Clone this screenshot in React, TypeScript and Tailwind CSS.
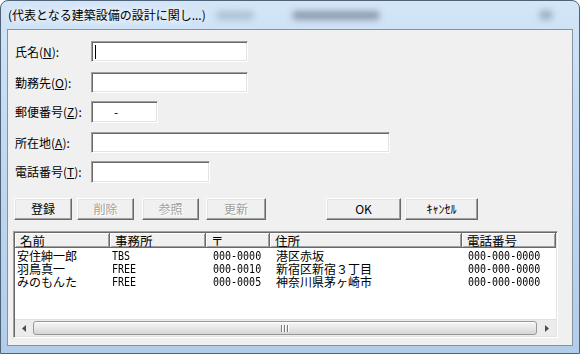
import React from "react";

const sunken =
  "bg-white border border-t-[#a0a0a0] border-l-[#a0a0a0] border-b-white border-r-white shadow-[inset_1px_1px_0_#696969,inset_-1px_-1px_0_#e3e3e3]";

function Label({ text, k }: { text: string; k: string }) {
  return (
    <div className="w-[76px] text-[12px] leading-[14px] text-black whitespace-nowrap">
      {text}(<span className="underline underline-offset-1">{k}</span>):
    </div>
  );
}

function Btn({
  children,
  w,
  ml,
  disabled,
}: {
  children: React.ReactNode;
  w: string;
  ml: string;
  disabled?: boolean;
}) {
  return (
    <div
      className={`${w} ${ml} h-[22px] flex items-center justify-center bg-[#f0f0f0] border border-t-white border-l-white border-b-[#696969] border-r-[#696969] shadow-[inset_-1px_-1px_0_#a0a0a0,inset_1px_1px_0_#e3e3e3] text-[12px] ${
        disabled ? "text-[#a0a0a0] [text-shadow:1px_1px_0_#fff]" : "text-black"
      }`}
    >
      {children}
    </div>
  );
}

const cols = [
  { name: "名前", w: "w-[95px]", pad: "pl-[2px]" },
  { name: "事務所", w: "w-[96px]", pad: "pl-[2px]" },
  { name: "〒", w: "w-[64px]", pad: "pl-[7px]" },
  { name: "住所", w: "w-[192px]", pad: "pl-[6px]" },
  { name: "電話番号", w: "w-[94px]", pad: "pl-[6px]" },
];

const rows = [
  ["安住紳一郎", "TBS", "000-0000", "港区赤坂", "000-000-0000"],
  ["羽鳥真一", "FREE", "000-0010", "新宿区新宿３丁目", "000-000-0000"],
  ["みのもんた", "FREE", "000-0005", "神奈川県茅ヶ崎市", "000-000-0000"],
];

export default function App() {
  return (
    <div className="w-[580px] h-[354px] bg-white overflow-hidden font-['Noto_Sans_CJK_JP','Noto_Sans',sans-serif]">
      <div className="relative w-full h-full rounded-t-[8px] border border-[#4f6378] bg-[linear-gradient(180deg,#d3e5f7_0%,#c3daf2_35%,#b2cdea_100%)] flex flex-col px-[6px] pb-[7px]">
        {/* title bar */}
        <div className="h-[28px] flex items-center pl-[1px] shrink-0">
          <span className="text-[12px] text-black [text-shadow:0_0_6px_#fff,0_0_10px_#fff] whitespace-nowrap">
            (代表となる建築設備の設計に関し...)
          </span>
          <div className="ml-[10px] w-[38px] h-[9px] rounded-full bg-[#9fb3c8] blur-[3px] opacity-70" />
          <div className="ml-[38px] w-[88px] h-[9px] rounded-full bg-[#5f6e80] blur-[3px] opacity-60" />
          <div className="ml-auto mr-[20px] w-[14px] h-[10px] rounded-full bg-[#7d8ea2] blur-[3px] opacity-60" />
        </div>

        {/* client */}
        <div className="flex-1 border border-[#8593a5] bg-[#f0f0f0] pl-[5px] pt-[11px] flex flex-col">
          <div className="pl-[2px] flex flex-col">
            <div className="flex items-center h-[21px]">
              <Label text="氏名" k="N" />
              <div className={`w-[157px] h-[21px] ${sunken} flex items-center pl-[3px]`}>
                <div className="w-[1px] h-[14px] bg-black" />
              </div>
            </div>
            <div className="flex items-center h-[21px] mt-[10px]">
              <Label text="勤務先" k="O" />
              <div className={`w-[157px] h-[21px] ${sunken}`} />
            </div>
            <div className="flex items-center h-[22px] mt-[8px]">
              <Label text="郵便番号" k="Z" />
              <div className={`w-[67px] h-[22px] ${sunken} flex items-center pl-[22px] text-[12px] leading-none`}>
                -
              </div>
            </div>
            <div className="flex items-center h-[21px] mt-[9px]">
              <Label text="所在地" k="A" />
              <div className={`w-[299px] h-[21px] ${sunken}`} />
            </div>
            <div className="flex items-center h-[22px] mt-[8px]">
              <Label text="電話番号" k="T" />
              <div className={`w-[119px] h-[22px] ${sunken}`} />
            </div>
          </div>

          {/* buttons */}
          <div className="flex mt-[15px] h-[22px]">
            <Btn w="w-[58px]" ml="ml-[1px]">登録</Btn>
            <Btn w="w-[57px]" ml="ml-[5px]" disabled>削除</Btn>
            <Btn w="w-[57px]" ml="ml-[8px]" disabled>参照</Btn>
            <Btn w="w-[60px]" ml="ml-[7px]" disabled>更新</Btn>
            <Btn w="w-[75px]" ml="ml-[60px]">OK</Btn>
            <Btn w="w-[73px]" ml="ml-[4px]">ｷｬﾝｾﾙ</Btn>
          </div>

          {/* list */}
          <div className={`mt-[11px] w-[545px] h-[107px] ${sunken} p-[1px] flex flex-col`}>
            <div className="flex h-[15px] shrink-0">
              {cols.map((c, i) => (
                <div
                  key={i}
                  className={`${c.w} h-[15px] flex items-center bg-[#f0f0f0] border-r border-b border-r-[#696969] border-b-[#696969] shadow-[inset_1px_1px_0_#fff,inset_-1px_-1px_0_#a0a0a0] text-[12.5px] leading-[13px] pl-[5px] text-black whitespace-nowrap`}
                >
                  {c.name}
                </div>
              ))}
            </div>
            <div className="flex-1 flex flex-col pt-[1px]">
              {rows.map((r, ri) => (
                <div key={ri} className="flex h-[13px] items-center">
                  {r.map((cell, ci) =>
                    ci === 0 || ci === 3 ? (
                      <div
                        key={ci}
                        className={`${cols[ci].w} ${cols[ci].pad} text-[12px] leading-[13px] text-black whitespace-nowrap`}
                      >
                        {cell}
                      </div>
                    ) : (
                      <div
                        key={ci}
                        className={`${cols[ci].w} ${cols[ci].pad} font-['DejaVu_Sans_Mono',monospace] text-[10px] leading-[13px] text-black whitespace-nowrap`}
                      >
                        <span className="inline-block origin-left scale-y-[1.25]">{cell}</span>
                      </div>
                    )
                  )}
                </div>
              ))}
            </div>
            {/* scrollbar */}
            <div className="h-[17px] shrink-0 flex bg-[#ececec] border-t border-[#e0e0e0]">
              <div className="w-[18px] flex items-center justify-center">
                <svg width="4" height="7" viewBox="0 0 4 7">
                  <path d="M4 0 L0 3.5 L4 7 Z" fill="#4d4d4d" />
                </svg>
              </div>
              <div className="flex-1 my-[1px] rounded-[3px] border border-[#979797] bg-[linear-gradient(180deg,#f6f6f6_0%,#e9e9e9_45%,#d6d6d6_100%)] shadow-[inset_0_1px_0_#fff] flex items-center justify-center">
                <svg width="8" height="7" viewBox="0 0 8 7">
                  <rect x="0" y="0" width="1" height="7" fill="#7a7a7a" />
                  <rect x="1" y="0" width="1" height="7" fill="#fff" />
                  <rect x="3" y="0" width="1" height="7" fill="#7a7a7a" />
                  <rect x="4" y="0" width="1" height="7" fill="#fff" />
                  <rect x="6" y="0" width="1" height="7" fill="#7a7a7a" />
                  <rect x="7" y="0" width="1" height="7" fill="#fff" />
                </svg>
              </div>
              <div className="w-[19px] flex items-center justify-center">
                <svg width="4" height="7" viewBox="0 0 4 7">
                  <path d="M0 0 L4 3.5 L0 7 Z" fill="#4d4d4d" />
                </svg>
              </div>
            </div>
          </div>
        </div>
      </div>
    </div>
  );
}
